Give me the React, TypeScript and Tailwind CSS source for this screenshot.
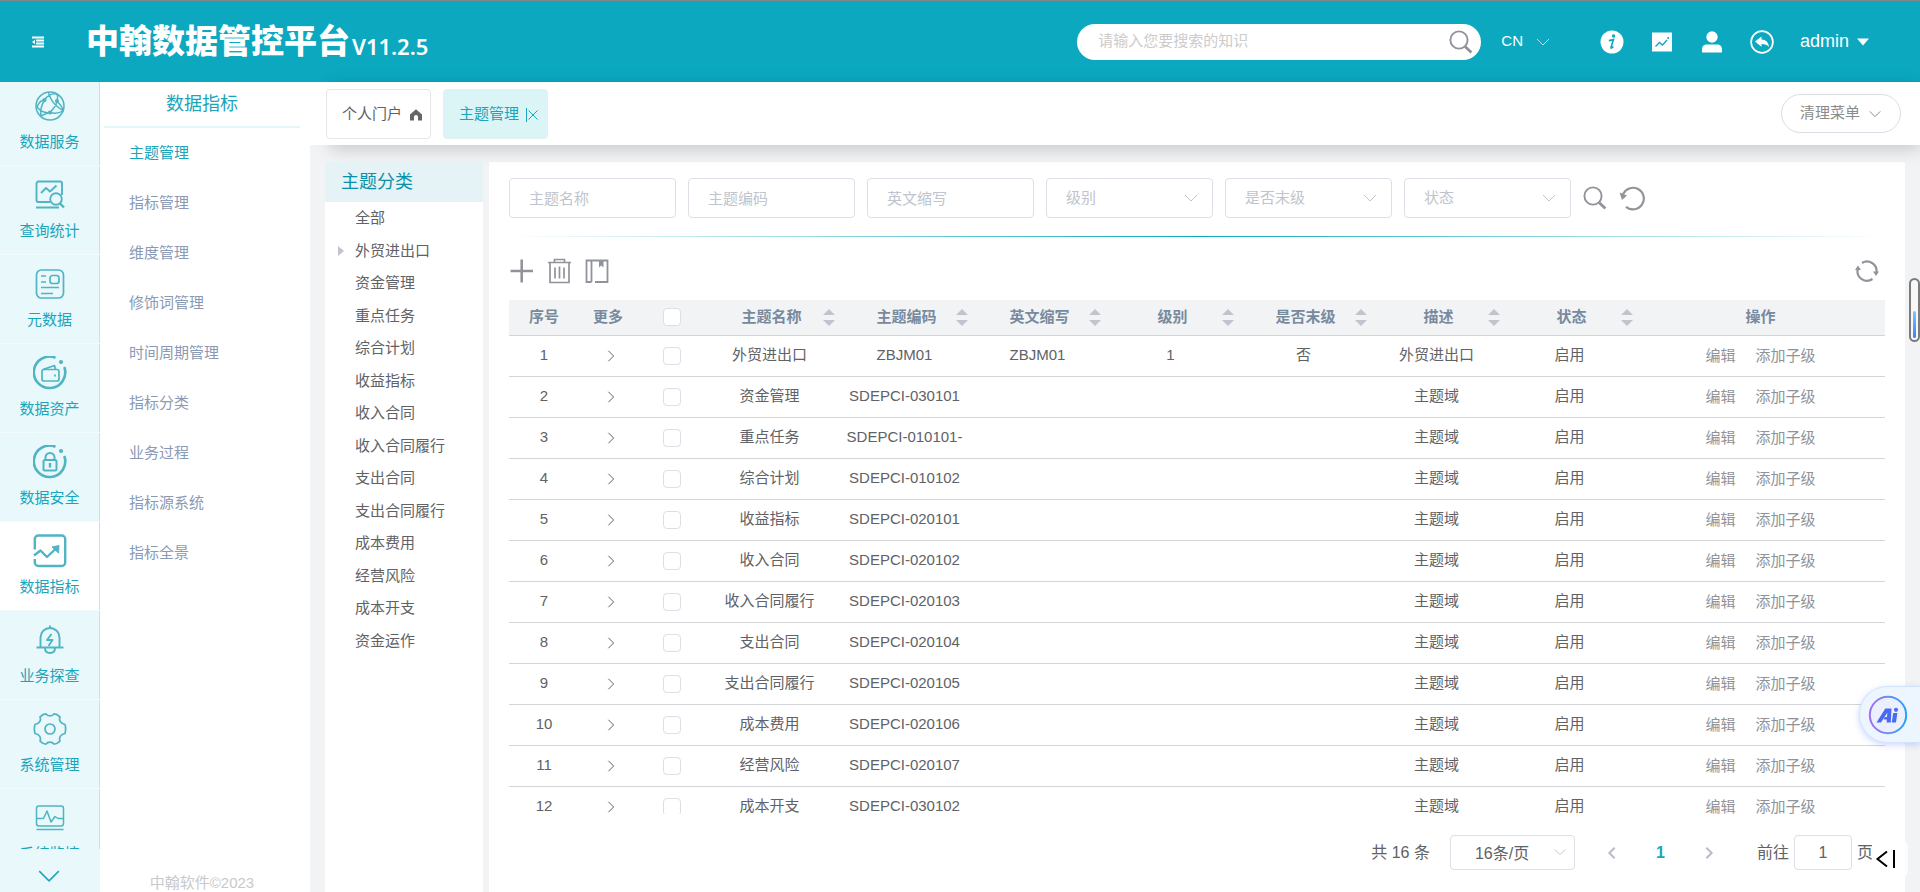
import type { ReactNode } from "react";

function Chevron({ className, dir = "down" }: { className: string; dir?: "down" | "left" | "right" }) {
  const d = dir === "down" ? "M2 5l6 6 6-6" : dir === "left" ? "M11 2L5 8l6 6" : "M5 2l6 6-6 6";
  return (
    <svg viewBox="0 0 16 16" className={className} fill="none" stroke="currentColor" aria-hidden="true">
      <path d={d} vectorEffect="non-scaling-stroke" />
    </svg>
  );
}

function Search({ className }: { className: string }) {
  return (
    <svg viewBox="0 0 24 24" className={className} fill="none" stroke="currentColor" aria-hidden="true">
      <circle cx="10" cy="10" r="8.6" strokeWidth="1.9" />
      <path d="M16 16.4l6.4 6.2" strokeWidth="2.8" />
    </svg>
  );
}

function NavSvg({ children, width = 1.4 }: { children: ReactNode; width?: number }) {
  return (
    <svg viewBox="0 0 34 34" className="h-[34px] w-[34px]" fill="none" stroke="currentColor" strokeWidth={width} strokeLinejoin="round" aria-hidden="true">
      {children}
    </svg>
  );
}

const ring = <path d="M22.5 1.8A15.7 15.7 0 1 0 31.3 11" strokeWidth="2.6" />;
const ringDot = <circle cx="28" cy="6" r="2.1" fill="currentColor" stroke="none" />;

const modules: { label: string; icon: ReactNode; active?: boolean }[] = [
  {
    label: "数据服务",
    icon: (
      <NavSvg width={1.5}>
        <circle cx="17" cy="17" r="14" />
        <path d="M11.5 11C15 6 19 4 24 5M11.5 11C8 17 7 22 8 27M3.5 17.5C8 23 12 24.5 17 23.5M17 23.5C21 19 24 16 24 12M17 23.5C22 25 27 24 30.5 21.5M24 12C26 14 29 18 30.5 21M15.5 3.5C17 8 18.5 15 30 21.5M11.5 11C9.5 11 6 13 4 18M17 23.5C13 24 10 26 8 27M24 12C25 9 25 7 24 5" />
        <g fill="currentColor" stroke="none">
          <circle cx="11.5" cy="11" r="2.1" />
          <circle cx="24" cy="12" r="2.1" />
          <circle cx="17" cy="23.5" r="2.1" />
        </g>
      </NavSvg>
    ),
  },
  {
    label: "查询统计",
    icon: (
      <NavSvg width={1.9}>
        <path d="M29 17V5.500a2 2 0 0 0-2-2H5.500a2 2 0 0 0-2 2V22a2 2 0 0 0 2 2H17M3 29.500h23M8 15l5-5 4 3.500 6.500-6" />
        <circle cx="23" cy="21" r="5.8" />
        <path d="M27 25.500l4 4" strokeWidth="2.4" />
      </NavSvg>
    ),
  },
  {
    label: "元数据",
    icon: (
      <NavSvg width={1.7}>
        <rect x="3.5" y="3" width="27" height="28" rx="5" />
        <rect x="17" y="8.5" width="9" height="8" rx="2.5" />
        <path d="M8 9h5M8 15h5M8 20.500h18M8 26.500h12" />
      </NavSvg>
    ),
  },
  {
    label: "数据资产",
    icon: (
      <NavSvg width={1.7}>
        {ring}
        {ringDot}
        <rect x="9" y="13.5" width="17" height="11.5" rx="2" />
        <path d="M10 13.500l11.500-4 1 4M22 18.500v2" />
      </NavSvg>
    ),
  },
  {
    label: "数据安全",
    icon: (
      <NavSvg width={2}>
        {ring}
        {ringDot}
        <rect x="10.5" y="15" width="13" height="10.5" rx="1.5" />
        <path d="M12.500 15v-2.500a4.500 4.500 0 0 1 9 0V15" />
        <path d="M17 18v4.500" strokeWidth="2.4" />
      </NavSvg>
    ),
  },
  {
    label: "数据指标",
    active: true,
    icon: (
      <NavSvg width={2.4}>
        <path d="M1.800 15.500V5a3.500 3.500 0 0 1 3.500-3.500h23.400A3.500 3.500 0 0 1 32.200 5v23.500a3.500 3.500 0 0 1-3.500 3.500H5.300a3.500 3.500 0 0 1-3.500-3.500V25M1 21.500l6.500-5L14 23l9-8.500" />
        <path d="M26 11.500l-7 1.500 6.500 6z" fill="currentColor" strokeWidth="1" />
      </NavSvg>
    ),
  },
  {
    label: "业务探查",
    icon: (
      <NavSvg width={1.9}>
        <path d="M7.500 24V14.500a9.500 9.500 0 0 1 19 0V24M3.500 24.500h27M17 2.500V5M12 25c0 3 2 5 5 5s5-2 5-5" />
        <path d="M18.500 11l-4.500 6h5.500l-4 6" />
      </NavSvg>
    ),
  },
  {
    label: "系统管理",
    icon: (
      <NavSvg width={1.7}>
        <path d="M13 1.800c1.500 2.700 6.500 2.700 8 0 2 0 4 1 6 3-1.500 3.500 1 7 5 7.700.700 2.500.700 6.500 0 9-4 .500-6.500 4-5 7.700-2 2-4 3-6 3-1.500-2.700-6.500-2.700-8 0-2 0-4-1-6-3 1.500-3.700-1-7.200-5-7.700-.700-2.500-.700-6.500 0-9 4-.700 6.500-4.200 5-7.700 2-2 4-3 6-3z" />
        <circle cx="17" cy="17" r="5" />
      </NavSvg>
    ),
  },
  {
    label: "系统监控",
    icon: (
      <NavSvg width={1.5}>
        <rect x="3.5" y="5" width="27" height="20" rx="2.5" />
        <path d="M3.500 28.500h27M4 17.500h6.500L14 10l4 11 4-5.500 3 2h5" />
      </NavSvg>
    ),
  },
];

const subMenu = ["主题管理", "指标管理", "维度管理", "修饰词管理", "时间周期管理", "指标分类", "业务过程", "指标源系统", "指标全景"];

const tree = ["全部", "外贸进出口", "资金管理", "重点任务", "综合计划", "收益指标", "收入合同", "收入合同履行", "支出合同", "支出合同履行", "成本费用", "经营风险", "成本开支", "资金运作"];

const rows: [string, string][] = [
  ["外贸进出口", "ZBJM01"],
  ["资金管理", "SDEPCI-030101"],
  ["重点任务", "SDEPCI-010101-"],
  ["综合计划", "SDEPCI-010102"],
  ["收益指标", "SDEPCI-020101"],
  ["收入合同", "SDEPCI-020102"],
  ["收入合同履行", "SDEPCI-020103"],
  ["支出合同", "SDEPCI-020104"],
  ["支出合同履行", "SDEPCI-020105"],
  ["成本费用", "SDEPCI-020106"],
  ["经营风险", "SDEPCI-020107"],
  ["成本开支", "SDEPCI-030102"],
];

const sortable = ["主题名称", "主题编码", "英文缩写", "级别", "是否末级", "描述", "状态"];

function Header() {
  return (
    <header className="flex h-[82px] shrink-0 items-center border-t border-[#7d878c] bg-[#0ba8c0] pr-[51px] text-white">
      <button aria-label="折叠菜单" className="ml-[31px]">
        <svg viewBox="0 0 14 12" className="h-3 w-[14px]" fill="none" stroke="currentColor" strokeWidth="1.8" aria-hidden="true">
          <path d="M1 1.500h12M5 4.500h8M5 7.500h8M1 10.500h12" />
          <path d="M4 3.800v4.400L1 6z" fill="currentColor" stroke="none" />
        </svg>
      </button>
      <h1 className="ml-[41px] flex items-end gap-[2px] whitespace-nowrap text-[33px] leading-10 font-black">
        中翰数据管控平台
        <span className="font-['Noto_Sans'] text-[22px] leading-8 font-semibold">V11.2.5</span>
      </h1>
      <div className="ml-auto flex h-9 w-[404px] items-center rounded-full bg-white pr-2 pl-[21px]">
        <input type="search" aria-label="搜索知识" placeholder="请输入您要搜索的知识" className="min-w-0 flex-1 bg-transparent text-[15px] text-[#606266] outline-none placeholder:text-[#cccccc]" />
        <button aria-label="搜索" className="text-[#8f9399]">
          <Search className="h-6 w-6" />
        </button>
      </div>
      <button className="ml-5 flex items-center gap-3 text-[15px]">
        CN
        <Chevron className="h-4 w-4 text-[#b9dde6]" />
      </button>
      <div className="ml-[49px] flex items-center gap-[26px]">
        <button aria-label="帮助">
          <svg viewBox="0 0 24 24" className="h-6 w-6" aria-hidden="true">
            <circle cx="12" cy="12" r="11.5" fill="#fff" />
            <circle cx="13.6" cy="6" r="1.7" fill="#0ba8c0" />
            <path d="M8.800 10.600c2-.200 3.600-.600 4.600-1L11 17.400c-.200 1 .600 1 2.400-.700" fill="none" stroke="#0ba8c0" strokeWidth="1.6" />
          </svg>
        </button>
        <button aria-label="统计">
          <svg viewBox="0 0 24 24" className="h-6 w-6" aria-hidden="true">
            <path fill="#fff" d="M2 2.500h20v19H2z" />
            <path d="M5.500 16.500l4-4 3 2.500 4.500-5" fill="none" stroke="#0ba8c0" strokeWidth="1.3" />
            <circle cx="18.2" cy="8" r="1" fill="#0ba8c0" />
          </svg>
        </button>
        <button aria-label="用户">
          <svg viewBox="0 0 24 24" className="h-6 w-6" fill="#fff" aria-hidden="true">
            <circle cx="12" cy="7" r="5.7" />
            <path d="M2 22.500v-3.500a4.500 4.500 0 0 1 4.500-4.500h11A4.500 4.500 0 0 1 22 19v3.500z" />
          </svg>
        </button>
        <button aria-label="返回">
          <svg viewBox="0 0 24 24" className="h-6 w-6" aria-hidden="true">
            <circle cx="12" cy="12" r="10.9" fill="none" stroke="#fff" strokeWidth="1.7" />
            <path fill="#fff" d="M5 11.500L11.500 6.500v3c4.500 0 7 3 7.500 7.500-2-2.300-4-3-7.500-3v2.800z" />
          </svg>
        </button>
        <button className="flex items-center gap-2 text-[18px]">
          admin
          <svg viewBox="0 0 12 8" className="h-2 w-3" fill="currentColor" aria-hidden="true">
            <path d="M0 .5h12L6 7.500z" />
          </svg>
        </button>
      </div>
    </header>
  );
}

function ModuleNav() {
  return (
    <nav aria-label="模块" className="flex w-[100px] shrink-0 flex-col bg-[#e8f8fb] text-[#1aa5bb]">
      <div className="min-h-0 flex-1 overflow-hidden">
        <ul className="-mt-[5px]">
          {modules.map((m) => (
            <li key={m.label} className="border-b border-[#f1fafc]">
              <a
                href="#"
                className={
                  "flex h-[88px] flex-col items-center gap-[9px] border-r border-[#bfe5ec] pt-3 text-[15px] leading-5 " + (m.active ? "bg-white" : "")
                }
              >
                <span className="text-[#50b4c3]">{m.icon}</span>
                {m.label}
              </a>
            </li>
          ))}
        </ul>
      </div>
      <button aria-label="更多模块" className="flex h-[43px] shrink-0 items-center justify-center pt-[10px] pr-[3px]">
        <Chevron className="h-[26px] w-[26px] stroke-[1.5]" />
      </button>
    </nav>
  );
}

function SubMenu() {
  return (
    <aside className="flex w-[210px] shrink-0 flex-col bg-white pr-[10px] pl-1">
      <h2 className="border-b-2 border-[#e3f6f9] pt-[9px] pb-[9px] text-center text-[18px] leading-[26px] text-[#1aa5bb]">数据指标</h2>
      <ul className="text-[15px]">
        {subMenu.map((s, i) => (
          <li key={s}>
            <a href="#" className={"flex h-[50px] items-center pl-[25px] " + (i === 0 ? "text-[#1aa5bb]" : "text-[#8a9ab4]")}>
              {s}
            </a>
          </li>
        ))}
      </ul>
      <footer className="mt-auto text-center text-[15px] leading-[18px] text-[#c8c9cc]">中翰软件©2023</footer>
    </aside>
  );
}

function TabsBar() {
  return (
    <div className="relative h-[63px] shrink-0 bg-white">
      <div className="absolute inset-y-0 right-0 left-5 shadow-[0_4px_16px_rgba(0,0,0,0.18)]" />
      <div className="relative flex h-full items-center gap-3 bg-white pr-[19px] pl-4 text-[15px]">
        <button className="flex h-[50px] w-[105px] items-center gap-2 rounded border border-[#e6e6e8] pt-[2px] pl-[15px] text-[#606266]">
          个人门户
          <svg viewBox="0 0 12 12" className="h-3 w-3" fill="#666" aria-hidden="true">
            <path d="M6 .3l6 5.200V11.600H8V8a2 2 0 0 0-4 0v3.600H0V5.500z" />
          </svg>
        </button>
        <div className="flex h-[50px] w-[105px] items-center rounded border border-[#e4eff0] bg-[#dbf4f6] pt-[2px] pl-[15px] text-[#1aa5bb]">
          <button>主题管理</button>
          <button aria-label="关闭" className="ml-[7px] border-l border-[#1aa5bb]">
            <svg viewBox="0 0 12 14" className="h-[14px] w-3" fill="none" stroke="currentColor" aria-hidden="true">
              <path d="M1.500 2.500l9 9M10.500 2.500l-9 9" />
            </svg>
          </button>
        </div>
        <button className="ml-auto flex h-[39px] w-[120px] items-center justify-center gap-2 rounded-full border border-[#dcdce6] text-[#8c8c8c]">
          清理菜单
          <Chevron className="h-[14px] w-[14px]" />
        </button>
      </div>
    </div>
  );
}

const field = "h-10 w-[167px] rounded border border-[#dcdfe6] bg-white pl-[19px] text-[15px] outline-none";

function FilterSelect({ label }: { label: string }) {
  return (
    <div className="relative">
      <select aria-label={label} defaultValue="" className={field + " appearance-none text-[#c0c4cc]"}>
        <option value="">{label}</option>
      </select>
      <Chevron className="pointer-events-none absolute top-3 right-[14px] h-4 w-4 text-[#c0c4cc]" />
    </div>
  );
}

function Checkbox({ label }: { label: string }) {
  return <input type="checkbox" aria-label={label} className="mx-auto block h-[18px] w-[18px] appearance-none rounded-sm border border-[#dcdfe6] bg-white" />;
}

function DataTable() {
  return (
    <table className="w-full table-fixed border-collapse text-center text-[15px] text-[#606266]">
      <colgroup>
        <col className="w-[70px]" />
        <col className="w-[64px]" />
        <col className="w-[58px]" />
        <col className="w-[137px]" />
        <col />
        <col />
        <col />
        <col />
        <col />
        <col />
        <col className="w-[249px]" />
      </colgroup>
      <thead className="bg-[#f2f3f5] text-[#788a9e]">
        <tr className="h-[35px] border-b border-[#d3d5d8]">
          <th>序号</th>
          <th className="pr-[6px]">更多</th>
          <th>
            <Checkbox label="全选" />
          </th>
          {sortable.map((c) => (
            <th key={c} className="whitespace-nowrap">
              <div className="grid grid-cols-[1fr_auto_1fr] items-center pl-1">
                <span className="col-start-2">{c}</span>
                <button aria-label={c + "排序"} className="mr-[3px] justify-self-end text-[#c0c4cc]">
                  <svg viewBox="0 0 12 18" className="h-[18px] w-3" fill="currentColor" aria-hidden="true">
                    <path d="M0 7l6-6 6 6zM0 12l6 6 6-6z" />
                  </svg>
                </button>
              </div>
            </th>
          ))}
          <th>操作</th>
        </tr>
      </thead>
      <tbody>
        {rows.map(([name, code], i) => (
          <tr key={code} className="h-[41px] border-b border-[#d3d5d8]">
            <td>{i + 1}</td>
            <td>
              <button aria-label={"展开" + name} className="mx-auto block pt-px">
                <Chevron dir="right" className="h-[14px] w-[14px]" />
              </button>
            </td>
            <td>
              <Checkbox label={"选择" + name} />
            </td>
            <td>{name}</td>
            <td className="whitespace-nowrap">{code}</td>
            <td>{i === 0 ? code : ""}</td>
            <td>{i === 0 ? "1" : ""}</td>
            <td>{i === 0 ? "否" : ""}</td>
            <td>{i === 0 ? name : "主题域"}</td>
            <td>启用</td>
            <td className="pt-[2px] text-[#909399]">
              <button>编辑</button>
              <button className="ml-5">添加子级</button>
            </td>
          </tr>
        ))}
      </tbody>
    </table>
  );
}

function Pagination() {
  return (
    <div className="flex h-[78px] shrink-0 items-start justify-end pt-[21px] pr-3 text-[16px] leading-9 text-[#606266]">
      <span>共 16 条</span>
      <div className="relative ml-5">
        <select aria-label="每页条数" className="block h-[35px] w-[125px] appearance-none rounded border border-[#dcdfe6] bg-white pl-6 text-[16px]">
          <option>16条/页</option>
        </select>
        <Chevron className="pointer-events-none absolute top-[10px] right-2 h-[14px] w-[14px] text-[#c0c4cc]" />
      </div>
      <button aria-label="上一页" className="ml-[29px] flex h-[35px] items-center text-[#b8bcc5]">
        <Chevron dir="left" className="h-[14px] w-4 stroke-2" />
      </button>
      <button className="ml-9 w-[9px] font-bold text-[#1aa5bb]">1</button>
      <button aria-label="下一页" className="ml-9 flex h-[35px] items-center text-[#b8bcc5]">
        <Chevron dir="right" className="h-[14px] w-4 stroke-2" />
      </button>
      <label className="ml-10 flex gap-[5px]">
        前往
        <input type="text" aria-label="页码" defaultValue="1" className="h-[35px] w-[58px] rounded border border-[#dcdfe6] bg-white text-center text-[16px]" />
        页
      </label>
    </div>
  );
}

function TopicPanel() {
  const tool = "block text-[#909399]";
  return (
    <main className="flex min-w-0 flex-1 flex-col bg-white px-5 pt-4">
      <form className="flex items-center gap-3" onSubmit={(e) => e.preventDefault()}>
        {["主题名称", "主题编码", "英文缩写"].map((f) => (
          <input key={f} type="text" aria-label={f} placeholder={f} className={field + " text-[#606266] placeholder:text-[#c0c4cc]"} />
        ))}
        {["级别", "是否末级", "状态"].map((f) => (
          <FilterSelect key={f} label={f} />
        ))}
        <button aria-label="查询" className="text-[#909399]">
          <Search className="h-6 w-6" />
        </button>
        <button type="button" aria-label="重置" className="text-[#909399]">
          <svg viewBox="0 0 26 26" className="h-[26px] w-[26px]" fill="none" stroke="currentColor" strokeWidth="2.2" aria-hidden="true">
            <path d="M4 9.500A10.800 10.800 0 1 1 7 21.800" />
            <path d="M.500 7.500L8 10.500 3 15z" fill="currentColor" stroke="none" />
          </svg>
        </button>
      </form>
      <div className="mt-[18px] h-px shrink-0 bg-linear-to-r from-transparent via-[#0ba8b8] to-transparent" />
      <div className="flex h-[63px] shrink-0 items-center gap-[13px] pt-1">
        <button aria-label="新增" className={tool}>
          <svg viewBox="0 0 25 26" className="h-[26px] w-[25px]" fill="none" stroke="currentColor" strokeWidth="2.6" aria-hidden="true">
            <path d="M1.500 13h22.500M12.700 1.500v23" />
          </svg>
        </button>
        <button aria-label="删除" className={tool}>
          <svg viewBox="0 0 25 26" className="h-[26px] w-[25px]" fill="none" stroke="currentColor" strokeWidth="1.7" aria-hidden="true">
            <path d="M1 4.500h23M7.500 4.500v-3h10v3M3 4.500v20h19v-20M8 9.500v11M12.500 8.500v12M17 9.500v11" />
          </svg>
        </button>
        <button aria-label="目录" className={tool}>
          <svg viewBox="0 0 25 26" className="h-[26px] w-[25px]" fill="none" stroke="currentColor" strokeWidth="1.8" aria-hidden="true">
            <path d="M6.500 24H1.500V2.500h21V24H10M6.500 2.500V24" />
            <path d="M14 2.500h4.500v7l-2.200-2-2.300 2z" fill="currentColor" stroke="none" />
          </svg>
        </button>
        <button aria-label="刷新" className={tool + " mr-[6px] ml-auto"}>
          <svg viewBox="0 0 24 24" className="h-6 w-6" fill="none" stroke="currentColor" strokeWidth="2.2" aria-hidden="true">
            <path d="M7 4A9.500 9.500 0 0 1 21.500 13M17.500 20A9.500 9.500 0 0 1 2.800 10" />
            <path d="M18 12.500h6L21 17zM0 11h6L3 6.500z" fill="currentColor" stroke="none" />
          </svg>
        </button>
      </div>
      <div className="min-h-0 flex-1 overflow-hidden">
        <DataTable />
      </div>
      <Pagination />
    </main>
  );
}

export default function App() {
  return (
    <div className="relative flex h-screen flex-col overflow-hidden bg-[#f2f3f5] font-['Liberation_Sans','Noto_Sans_CJK_SC',sans-serif] font-normal">
      <Header />
      <div className="flex min-h-0 flex-1">
        <ModuleNav />
        <SubMenu />
        <div className="flex min-w-0 flex-1 flex-col">
          <TabsBar />
          <div className="flex min-h-0 flex-1 gap-[6px] pt-[17px] pr-[15px] pl-[15px]">
            <section className="relative w-[158px] shrink-0 bg-white">
              <h2 className="bg-[#e5f2f6] pl-4 text-[18px] leading-10 text-[#0a90a8]">主题分类</h2>
              <ul className="grid h-[455px] auto-rows-fr text-[15px] text-[#606266]">
                {tree.map((t, i) => (
                  <li key={t} className="flex items-center pl-[13px]">
                    <span className="flex w-[17px]">
                      {i === 1 && (
                        <svg viewBox="0 0 6 10" className="h-[10px] w-[6px]" fill="#c0c4cc" aria-hidden="true">
                          <path d="M0 0l6 5-6 5z" />
                        </svg>
                      )}
                    </span>
                    <button>{t}</button>
                  </li>
                ))}
              </ul>
            </section>
            <TopicPanel />
          </div>
        </div>
      </div>

      <div className="absolute top-[278px] right-0 flex h-16 w-[11px] items-end rounded-full border-2 border-[#7b7b7b] bg-[#f8f8f8] p-[2px]">
        <div className="h-[27px] w-full rounded-sm bg-linear-to-b from-[#74cbff] to-[#3a80ff]" />
      </div>

      <button aria-label="AI 助手" className="absolute top-[686px] right-0 flex h-[57px] w-[61px] items-center rounded-l-full border border-r-0 border-[#d3e5fd] bg-[#edf5ff] pl-2 shadow-[0_2px_6px_rgba(90,120,255,0.3)]">
        <svg viewBox="0 0 40 40" className="h-10 w-10" aria-hidden="true">
          <defs>
            <linearGradient id="aiRing" x1="0" y1="0" x2="1" y2="0">
              <stop offset="0" stopColor="#a06ff5" />
              <stop offset="0.5" stopColor="#6f8cf3" />
              <stop offset="1" stopColor="#22a4f5" />
            </linearGradient>
          </defs>
          <circle cx="20" cy="20" r="18.2" fill="#eceffe" stroke="url(#aiRing)" strokeWidth="2" />
          <path d="M8.500 27.500L17.300 13.500H23.500L22.800 27.500H18.600L18.800 24.500H15.600L16.800 22H19L19.300 17.800L13 27.500z" fill="#4a6bf0" />
          <path d="M25.200 18h4.200l-1.500 9.500h-4.200z" fill="#4a6bf0" />
          <circle cx="28" cy="14.8" r="2.1" fill="#4a6bf0" />
        </svg>
      </button>

      <button aria-label="展开侧栏" className="absolute right-3 bottom-[15px] flex h-9 w-9 items-center rounded-md bg-white/80 pl-px">
        <svg viewBox="0 0 22 20" className="h-5 w-[22px]" fill="none" stroke="#000" strokeWidth="2" aria-hidden="true">
          <path d="M14 2.500L4.500 10l9.500 7.500M21 1v18" />
        </svg>
      </button>
    </div>
  );
}
